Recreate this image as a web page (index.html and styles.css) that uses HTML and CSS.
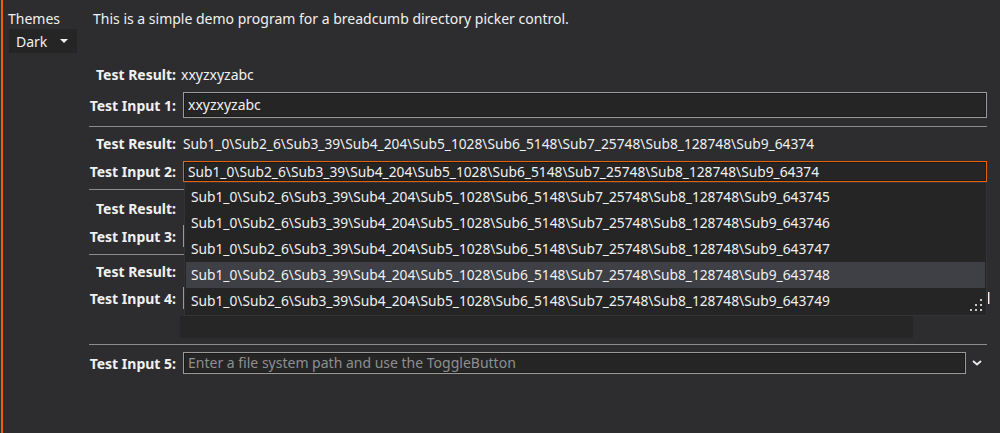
FILE: index.html
```html
<!DOCTYPE html>
<html>
<head>
<meta charset="utf-8">
<link rel="stylesheet" href="styles.css">
</head>
<body>
<div class="app">
  <aside class="side">
    <div class="side-label">Themes</div>
    <div class="combo">
      <span>Dark</span>
      <svg class="combo-arrow" width="8" height="4" viewBox="0 0 8 4"><path d="M0 0h8L4 4z" fill="#f1f1f1"/></svg>
    </div>
  </aside>
  <main class="main">
    <p class="desc">This is a simple demo program for a breadcumb directory picker control.</p>

    <section class="sec sec1">
      <div class="row result"><span class="lbl">Test Result:</span><span class="val">xxyzxyzabc</span></div>
      <div class="row input"><span class="lbl">Test Input 1:</span><div class="box box-tall">xxyzxyzabc</div></div>
    </section>

    <section class="sec sec2">
      <div class="row result"><span class="lbl">Test Result:</span><span class="val path">Sub1_0\Sub2_6\Sub3_39\Sub4_204\Sub5_1028\Sub6_5148\Sub7_25748\Sub8_128748\Sub9_64374</span></div>
      <div class="row input"><span class="lbl">Test Input 2:</span>
        <div class="field">
          <div class="box box-focus path">Sub1_0\Sub2_6\Sub3_39\Sub4_204\Sub5_1028\Sub6_5148\Sub7_25748\Sub8_128748\Sub9_64374</div>
          <div class="popup path">
            <div class="item">Sub1_0\Sub2_6\Sub3_39\Sub4_204\Sub5_1028\Sub6_5148\Sub7_25748\Sub8_128748\Sub9_643745</div>
            <div class="item">Sub1_0\Sub2_6\Sub3_39\Sub4_204\Sub5_1028\Sub6_5148\Sub7_25748\Sub8_128748\Sub9_643746</div>
            <div class="item">Sub1_0\Sub2_6\Sub3_39\Sub4_204\Sub5_1028\Sub6_5148\Sub7_25748\Sub8_128748\Sub9_643747</div>
            <div class="item hot">Sub1_0\Sub2_6\Sub3_39\Sub4_204\Sub5_1028\Sub6_5148\Sub7_25748\Sub8_128748\Sub9_643748</div>
            <div class="item">Sub1_0\Sub2_6\Sub3_39\Sub4_204\Sub5_1028\Sub6_5148\Sub7_25748\Sub8_128748\Sub9_643749</div>
            <svg class="grip" width="12" height="12" viewBox="0 0 12 12" fill="#c8c8c8">
              <rect x="10" y="0" width="2" height="2"/>
              <rect x="5" y="5" width="2" height="2"/><rect x="10" y="5" width="2" height="2"/>
              <rect x="0" y="10" width="2" height="2"/><rect x="5" y="10" width="2" height="2"/><rect x="10" y="10" width="2" height="2"/>
            </svg>
          </div>
        </div>
      </div>
    </section>

    <section class="sec sec3">
      <div class="row result"><span class="lbl">Test Result:</span><span class="val"></span></div>
      <div class="row input"><span class="lbl">Test Input 3:</span><div class="box box-plain"></div></div>
    </section>

    <section class="sec sec4">
      <div class="row result"><span class="lbl">Test Result:</span><span class="val"></span></div>
      <div class="row input"><span class="lbl">Test Input 4:</span>
        <div class="field">
          <div class="box box-plain"></div>
          <span class="edge-mark"></span>
        </div>
      </div>
      <div class="row shade-row"><span class="lbl"></span><div class="shade"></div></div>
    </section>

    <section class="sec sec5">
      <div class="row input"><span class="lbl">Test Input 5:</span>
        <div class="box box-ph">Enter a file system path and use the ToggleButton</div>
        <div class="toggle">
          <svg width="10" height="6" viewBox="0 0 10 6"><path d="M1 1l4 3.5L9 1" fill="none" stroke="#e8e8e8" stroke-width="2"/></svg>
        </div>
      </div>
    </section>
  </main>
</div>
</body>
</html>
```

FILE: styles.css
```css
* { box-sizing: border-box; }
html, body { margin: 0; padding: 0; }
body {
  background: #2d2d30;
  color: #f1f1f1;
  font-family: "Noto Sans", "Open Sans", sans-serif;
  font-size: 14px;
  width: 1000px;
  height: 433px;
  overflow: hidden;
}
.app {
  display: flex;
  height: 433px;
  margin-left: 1px;
  border-left: 2px solid #e8620c;
}
.side {
  width: 82px;
  padding: 10px 0 0 5px;
}
.side-label {
  line-height: 18px;
}
.combo {
  margin: 1px 0 0 1px;
  width: 68px;
  height: 24px;
  background: #252526;
  display: flex;
  align-items: center;
  padding-left: 7px;
  gap: 13px;
}
.main {
  flex: 1;
  padding: 0 13px 0 4px;
  position: relative;
}
.desc {
  margin: 10px 0 0 4px;
  line-height: 17px;
}
.path { font-size: 13.75px; }
.sec {
  display: flex;
  flex-direction: column;
}
.sec + .sec {
  border-top: 1px solid #8c8c8c;
}
.row {
  display: grid;
  grid-template-columns: 94px 1fr;
  align-items: center;
}
.input {
  grid-template-columns: 94px 1fr auto;
}
.lbl {
  font-weight: bold;
  text-align: right;
  padding-right: 7px;
  white-space: nowrap;
}
.val {
  white-space: nowrap;
  margin-left: -2px;
}
.val.path { margin-left: 0; }
.result { height: 20px; }
.box {
  height: 22px;
  background: #252526;
  border: 1px solid #9a9a9a;
  box-shadow: inset 0 0 0 1px #1b1b1c;
  padding: 0 4px;
  line-height: 20px;
  white-space: nowrap;
  overflow: hidden;
}
.box-tall { height: 26px; line-height: 24px; }
.box-focus { border-color: #e8620c; height: 21px; line-height: 19px; }
.box-ph { color: #8f8f8f; }
.field { position: relative; }

.sec1 { margin-top: 37px; }
.sec1 .result { margin-top: 0; }
.sec1 .input { margin-top: 8px; margin-bottom: 8px; }

.sec2 .result { margin-top: 6px; }
.sec2 .input { margin-top: 8px; margin-bottom: 7px; }

.sec3 .result { margin-top: 8px; }
.sec3 .input { margin-top: 7px; margin-bottom: 7px; }

.sec4 .result { margin-top: 6px; }
.sec4 .input { margin-top: 6px; }
.shade-row { margin-top: 7px; margin-bottom: 6px; }
.shade {
  height: 22px;
  width: 733px;
  margin-left: -3px;
  background: #262627;
}
.edge-mark {
  position: absolute;
  right: -3px;
  top: 5px;
  width: 2px;
  height: 12px;
  background: linear-gradient(to right, #f4f4f4 50%, #e8620c 50%);
}

.sec5 .input { margin-top: 7px; }
.toggle {
  width: 21px;
  height: 22px;
  display: flex;
  align-items: center;
  justify-content: center;
}

.popup {
  position: absolute;
  top: 100%;
  left: 1px;
  right: 0;
  height: 134px;
  background: #252526;
  border: 1px solid #333337;
  padding: 1px 1px 0 1px;
  z-index: 5;
}
.item {
  height: 26px;
  line-height: 26px;
  padding-left: 5px;
  white-space: nowrap;
}
.item.hot { background: #3f3f46; }
.grip {
  position: absolute;
  right: 4px;
  bottom: 4px;
}
```
